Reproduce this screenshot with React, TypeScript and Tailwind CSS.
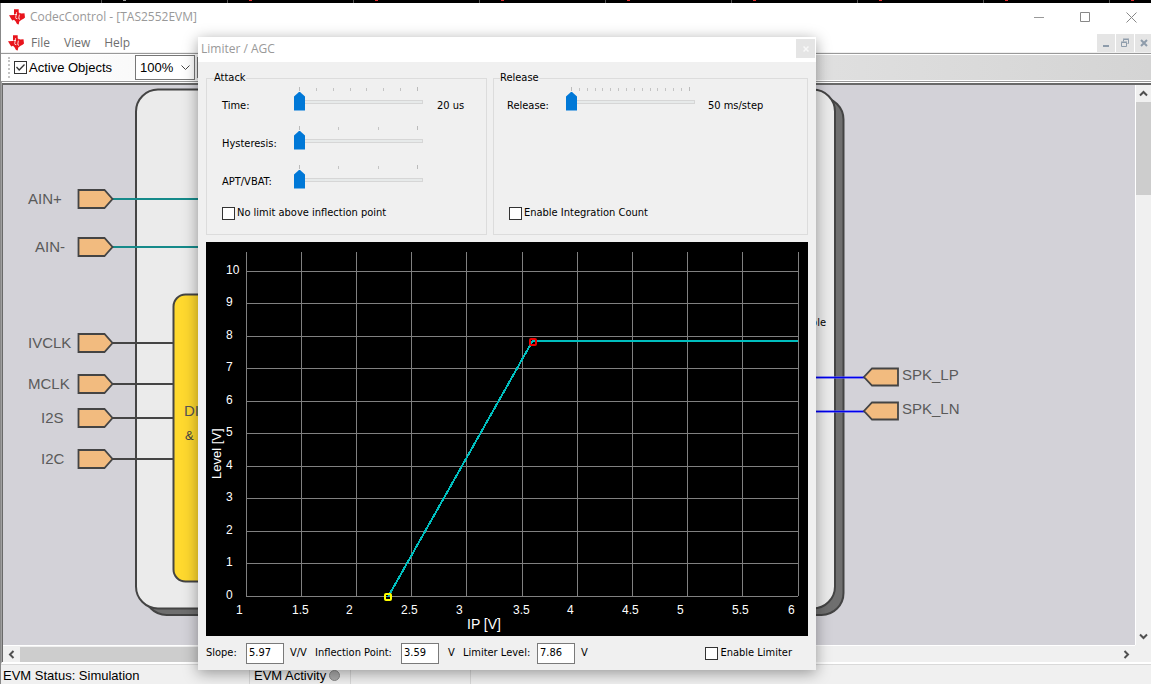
import React from "react";

const UI = "font-['DejaVu_Sans_Condensed','DejaVu_Sans',sans-serif] text-[11px] leading-[14px]";
const SEGOE = "font-['Open_Sans','Noto_Sans',sans-serif] text-xs";

function Logo() {
  return (
    <svg width="17" height="16" viewBox="0 0 17 16" aria-hidden="true" className="shrink-0">
      <path
        d="M5 .3h4.700v3.200l2.600.9 3.200-.1.300 2.700.2 1.600-1.400 1.200-2 .9-2.300 1.900-.6 3-1.700-.7-1.500-2.600-1.500-1.600-1.700.8-1.200-1.700L0 6.300l5-.4z"
        fill="#e8141c"
      />
      <path d="M7.600 3.200 6.700 8.400q-.2 1.500 1.600 1.300M5.400 5.500h2.600M10.400 5.600l-.6 3.400q-.2 1.500 1.200 1.200M10.900 3.400l-.2.900" fill="none" stroke="#fff" strokeWidth=".8" />
    </svg>
  );
}

function TopStrip() {
  return (
    <div className="flex h-[3px] shrink-0 overflow-hidden bg-black pl-[101px]" aria-hidden="true">
      {Array.from({ length: 12 }, (_, i) => (
        <span key={i} className="flex w-[126px] shrink-0 border-l border-[#555] pl-[21px]">
          <span className={i ? "h-px w-[3px] bg-[#e03030]" : "h-px w-[3px] bg-[#999]"} />
        </span>
      ))}
    </div>
  );
}

function TitleBar() {
  return (
    <header className="flex h-[30px] shrink-0 items-center bg-white pb-0.5 pl-2">
      <Logo />
      <h1 className={`${SEGOE} ml-1 flex-1 text-[#999]`}>CodecControl - [TAS2552EVM]</h1>
      <button aria-label="Minimize" className="grid h-7 w-10 place-items-center">
        <svg width="11" height="11"><path d="M0 5.5h10" stroke="#999" /></svg>
      </button>
      <button aria-label="Maximize" className="grid h-7 w-[52px] place-items-center">
        <svg width="11" height="11"><path d="M.5.5h9v9h-9z" fill="none" stroke="#888" /></svg>
      </button>
      <button aria-label="Close" className="grid h-7 w-10 place-items-center">
        <svg width="11" height="11"><path d="M.5.5l10 10M10.500 .5l-10 10" stroke="#888" /></svg>
      </button>
    </header>
  );
}

function MenuBar() {
  const mdi = "grid h-[18px] w-[18px] place-items-center bg-[#e5e5e5]";
  return (
    <nav className="flex h-5 shrink-0 items-center border-b border-[#f0f0f0] bg-white pl-[7px]">
      <Logo />
      <div className={`${SEGOE} ml-1.5 flex flex-1 gap-[14px] text-[#6e6e6e]`}>
        <button>File</button>
        <button>View</button>
        <button>Help</button>
      </div>
      <div className="flex gap-px">
        <button aria-label="Minimize document" className={mdi}>
          <svg width="10" height="10"><path d="M2 8h6" stroke="#8e9cab" strokeWidth="2" /></svg>
        </button>
        <button aria-label="Restore document" className={mdi}>
          <svg width="10" height="10" fill="none" stroke="#8e9cab">
            <path d="M1.500 4.500h5v4h-5zM1 4h6M3.500 3.500v-2h5v4h-1M3 1h6" />
          </svg>
        </button>
        <button aria-label="Close document" className="grid h-[18px] w-4 place-items-center bg-[#e5e5e5] pl-0.5">
          <svg width="8" height="8"><path d="M1 1l6 6M7 1L1 7" stroke="#8e9cab" strokeWidth="2" /></svg>
        </button>
      </div>
    </nav>
  );
}

function Check({ id, label, checked = false }: { id: string; label: string; checked?: boolean }) {
  return (
    <label htmlFor={id} className="flex items-center gap-0.5">
      <input
        id={id}
        type="checkbox"
        defaultChecked={checked}
        className="peer h-[13px] w-[13px] shrink-0 appearance-none border border-[#333] bg-white"
      />
      <svg width="9" height="9" className="-ml-[13px] mr-0.5 hidden shrink-0 peer-checked:block" aria-hidden="true">
        <path d="M.5 4l2.700 3L8.500 1.500" fill="none" stroke="#333" strokeWidth="1.3" />
      </svg>
      {label}
    </label>
  );
}

function Toolbar() {
  return (
    <div className="shrink-0 border-y border-[#999] bg-white py-px">
      <div className="flex h-[25px] items-center bg-linear-to-r from-white via-[#e8e8e8] to-[#d4d4d4] pl-[7px] font-['Liberation_Sans',Arial,sans-serif] text-[13px] leading-4 text-black">
        <span className="mr-1 h-[21px] border-l-2 border-dotted border-[#c4c4c4]" aria-hidden="true" />
        <Check id="active" label="Active Objects" checked />
        <div className="relative ml-[23px] flex h-[25px] w-[60px] items-center border border-[#777] bg-white">
          <select aria-label="Zoom" className="w-full appearance-none pl-1 outline-none">
            <option>100%</option>
          </select>
          <svg width="9" height="6" className="pointer-events-none absolute right-1" aria-hidden="true">
            <path d="M.5.5l4 4 4-4" fill="none" stroke="#444" />
          </svg>
        </div>
        <span className="ml-0.5 h-[21px] border-l border-[#777]" aria-hidden="true" />
      </div>
    </div>
  );
}

const leftPins = [
  { name: "AIN+", x: 25, y: 114, end: 240, color: "#158a8a" },
  { name: "AIN-", x: 32, y: 162, end: 240, color: "#158a8a" },
  { name: "IVCLK", x: 25, y: 258, end: 170, color: "#444" },
  { name: "MCLK", x: 25, y: 299, end: 170, color: "#444" },
  { name: "I2S", x: 38, y: 333, end: 170, color: "#444" },
  { name: "I2C", x: 38, y: 374, end: 170, color: "#444" },
];
const rightPins = [
  { name: "SPK_LP", y: 292 },
  { name: "SPK_LN", y: 326 },
];

function Diagram() {
  return (
    <svg
      width="1132"
      height="560"
      viewBox="0 0 1132 560"
      className="block font-['Liberation_Sans',Arial,sans-serif] text-[15px]"
      role="img"
      aria-label="TAS2552 block diagram"
    >
      <rect x="141.500" y="12.500" width="699" height="517.500" rx="22" fill="#6f6f6f" stroke="#444" strokeWidth="2" />
      <rect x="133" y="4.500" width="699" height="519" rx="22" fill="#ebebeb" stroke="#444" strokeWidth="2" />
      {leftPins.map((p) => (
        <g key={p.name}>
          <path d={`M110 ${p.y}H${p.end}`} stroke={p.color} strokeWidth="1.8" />
          <path d={`M75.500 ${p.y - 9}h26l8 9-8 9h-26z`} fill="#f2bb7f" stroke="#444" strokeWidth="1.8" />
          <text x={p.x} y={p.y + 5} fill="#5a5a5a">{p.name}</text>
        </g>
      ))}
      <rect x="170.500" y="209.500" width="180" height="287" rx="12" fill="#ffd92e" stroke="#444" strokeWidth="2" />
      <text x="181" y="331" fill="#555">DI</text>
      <text x="182" y="355" fill="#444" className="text-[13px]">&amp;</text>
      <text x="823" y="241" textAnchor="end" className="font-['DejaVu_Sans_Condensed','DejaVu_Sans',sans-serif] text-[11px]">Enable</text>
      {rightPins.map((p) => (
        <g key={p.name}>
          <path d={`M780 ${p.y + 0.5}H862`} stroke="#8a8aff" strokeWidth="3" opacity=".5" />
          <path d={`M780 ${p.y + 0.5}H862`} stroke="#0000ee" strokeWidth="1.4" />
          <path d={`M895 ${p.y - 8.500}h-26l-8 8.500 8 8.500h26z`} fill="#f2bb7f" stroke="#444" strokeWidth="1.8" />
          <text x="899" y={p.y + 3} fill="#5a5a5a">{p.name}</text>
        </g>
      ))}
    </svg>
  );
}

function Chevron({ d }: { d: string }) {
  return (
    <svg width="9" height="9" aria-hidden="true">
      <path d={d} fill="none" stroke="#505050" strokeWidth="2" />
    </svg>
  );
}

function Workspace() {
  return (
    <main className="grid min-h-0 flex-1 grid-cols-[minmax(0,1fr)_16px] grid-rows-[minmax(0,1fr)_17px] border-t-2 border-l border-[#696969] bg-[#f0f0f0]">
      <div className="overflow-hidden bg-[#d3d2d8]">
        <Diagram />
      </div>
      <div className="flex flex-col items-center border-l border-white">
        <button aria-label="Scroll up" className="grid h-[17px] place-items-center"><Chevron d="M1 6.500l3.500-3.500L8 6.500" /></button>
        <div className="h-[93px] w-full bg-[#cdcdcd]" />
        <button aria-label="Scroll down" className="mt-auto grid h-[17px] place-items-center"><Chevron d="M1 2.500L4.500 6 8 2.500" /></button>
      </div>
      <div className="flex items-center border-t border-white">
        <button aria-label="Scroll left" className="grid w-[17px] place-items-center"><Chevron d="M6.500 1L3 4.500 6.500 8" /></button>
        <div className="h-[15px] w-1/2 bg-[#cdcdcd]" />
        <button aria-label="Scroll right" className="ml-auto grid w-[17px] place-items-center"><Chevron d="M2.500 1L6 4.500 2.500 8" /></button>
      </div>
    </main>
  );
}

function StatusBar() {
  return (
    <footer className="flex h-5 shrink-0 items-stretch border-t border-[#d9d9d9] bg-[#f0f0f0] font-['Liberation_Sans',Arial,sans-serif] text-[13px] leading-[22px] text-black">
      <span className="w-[249px] border-r border-[#d7d7d7] pl-0.5">EVM Status: Simulation</span>
      <span className="flex w-[101px] items-center border-r border-[#d7d7d7] pl-1 pt-0.5">
        EVM Activity
        <span className="ml-[3px] h-[11px] w-[11px] rounded-full border border-[#888] bg-[#aaa]" />
      </span>
      <span className="w-[120px] border-r border-[#d7d7d7]" />
    </footer>
  );
}

function Slider({ id, ticks }: { id: string; ticks: number }) {
  return (
    <div className="flex h-[39px] w-[129px] flex-col gap-px pt-0.5">
      <div className="flex h-1 items-end justify-between px-[5px]" aria-hidden="true">
        {Array.from({ length: ticks }, (_, i) => (
          <span key={i} className={i === 0 || i === ticks - 1 ? "h-1 w-px bg-[#bbb]" : "h-[3px] w-px bg-[#c4c4c4]"} />
        ))}
      </div>
      <input
        id={id}
        type="range"
        min={0}
        max={ticks - 1}
        defaultValue={0}
        className="m-0 block h-[19px] w-full appearance-none bg-transparent [&::-webkit-slider-runnable-track]:h-1 [&::-webkit-slider-runnable-track]:border [&::-webkit-slider-runnable-track]:border-[#d6d6d6] [&::-webkit-slider-runnable-track]:bg-[#e7eaea] [&::-webkit-slider-thumb]:-mt-[9px] [&::-webkit-slider-thumb]:-ml-px [&::-webkit-slider-thumb]:h-[19px] [&::-webkit-slider-thumb]:w-[11px] [&::-webkit-slider-thumb]:appearance-none [&::-webkit-slider-thumb]:bg-[#0078d7] [&::-webkit-slider-thumb]:[clip-path:polygon(50%_0,100%_26%,100%_100%,0_100%,0_26%)]"
      />
    </div>
  );
}

const gridX = [40, 95, 150, 205, 260, 316, 371, 426, 481, 536, 592];
const gridY = [354, 321, 289, 256, 224, 191, 159, 126, 94, 61, 29];
const xLabels = [
  ["1", 30], ["1.5", 86], ["2", 140], ["2.5", 195], ["3", 250], ["3.5", 307], ["4", 361], ["4.5", 416], ["5", 471], ["5.5", 526], ["6", 582],
] as const;

function Chart() {
  return (
    <svg
      viewBox="0 0 602 394"
      className="mt-[7px] block w-full bg-black font-['Liberation_Sans',Arial,sans-serif] text-xs"
      role="img"
      aria-label="Limiter level against input"
    >
      <g stroke="#808080" shapeRendering="crispEdges">
        {gridX.map((x) => <path key={x} d={`M${x + 0.5} 10V354`} />)}
        {gridY.map((y) => <path key={y} d={`M40 ${y + 0.5}H592`} />)}
      </g>
      <g fill="#fff">
        {gridY.map((y, i) => <text key={i} x="20" y={y + 3}>{i}</text>)}
        {xLabels.map(([t, x]) => <text key={t} x={x} y="372">{t}</text>)}
        <text x="261" y="387" className="text-sm">IP [V]</text>
        <text transform="translate(15 237) rotate(-90)" className="text-[13px]">Level [V]</text>
      </g>
      <path d="M182 355L326.500 99H592" fill="none" stroke="#00bebe" strokeWidth="2" shapeRendering="crispEdges" />
      <g fill="none" strokeWidth="2">
        <rect x="179" y="352" width="6" height="6" rx="1" stroke="#ff0" />
        <rect x="324" y="97" width="6" height="6" rx="1" stroke="#f00000" />
      </g>
    </svg>
  );
}

function Field({ id, label, value, unit, labelClass, unitClass }: { id: string; label: string; value: string; unit: string; labelClass: string; unitClass: string }) {
  return (
    <>
      <label htmlFor={id} className={labelClass}>{label}</label>
      <input id={id} type="text" defaultValue={value} className="h-[21px] w-[38px] border border-[#7a7a7a] bg-white pl-0.5 pb-px outline-none" />
      <span className={unitClass}>{unit}</span>
    </>
  );
}

function LimiterDialog() {
  const group = "min-w-0 border border-[#dcdcdc] pb-[14px]";
  return (
    <section
      role="dialog"
      aria-label="Limiter / AGC"
      className={`${UI} absolute left-[198px] top-[37px] w-[618px] bg-[#f0f0f0] text-black shadow-[0_3px_14px_rgba(0,0,0,0.38)]`}
    >
      <div className="flex h-[25px] items-center justify-between bg-white pb-0.5 pl-[3px] pr-px">
        <h2 className={`${SEGOE} text-[#999]`}>Limiter / AGC</h2>
        <button aria-label="Close dialog" className="grid h-[19px] w-[19px] place-items-center bg-[#e5e5e5]">
          <svg width="6" height="6"><path d="M.5.5l5 5M5.500.5l-5 5" stroke="#f8f8f8" strokeWidth="1.5" /></svg>
        </button>
      </div>
      <div className="px-2 pt-[9px]">
        <div className="grid grid-cols-[281fr_315fr] gap-1.5">
          <fieldset className={`${group} pl-[15px]`}>
            <legend className="-ml-2">Attack</legend>
            <div className="flex">
              <div className="flex w-[72px] flex-col gap-6 pt-[14px]">
                <label htmlFor="time">Time:</label>
                <label htmlFor="hyst">Hysteresis:</label>
                <label htmlFor="apt">APT/VBAT:</label>
              </div>
              <div>
                <Slider id="time" ticks={8} />
                <Slider id="hyst" ticks={4} />
                <Slider id="apt" ticks={4} />
              </div>
              <output htmlFor="time" className="ml-[14px] pt-[14px]">20 us</output>
            </div>
            <div className="mt-1"><Check id="nolimit" label="No limit above inflection point" /></div>
          </fieldset>
          <fieldset className={`${group} pl-[13px]`}>
            <legend className="-ml-[7px]">Release</legend>
            <div className="flex h-[117px]">
              <label htmlFor="release" className="w-[59px] pt-[14px]">Release:</label>
              <Slider id="release" ticks={16} />
              <output htmlFor="release" className="ml-[13px] pt-[14px]">50 ms/step</output>
            </div>
            <div className="ml-0.5 mt-1"><Check id="integration" label="Enable Integration Count" /></div>
          </fieldset>
        </div>
        <Chart />
        <div className="flex h-[34px] items-center pr-4">
          <Field id="slope" label="Slope:" value="5.97" unit="V/V" labelClass="w-10" unitClass="ml-1.5 w-[25px]" />
          <Field id="inflection" label="Inflection Point:" value="3.59" unit="V" labelClass="w-[86px]" unitClass="ml-[9px] w-[15px]" />
          <Field id="level" label="Limiter Level:" value="7.86" unit="V" labelClass="w-[74px]" unitClass="ml-1.5" />
          <div className="ml-auto"><Check id="limiter" label="Enable Limiter" /></div>
        </div>
      </div>
    </section>
  );
}

export default function App() {
  return (
    <div className="relative flex h-screen flex-col overflow-hidden bg-white">
      <TopStrip />
      <div className="flex min-h-0 flex-1 flex-col border-l border-[#888]">
        <TitleBar />
        <MenuBar />
        <Toolbar />
        <div className="flex min-h-0 flex-1 border-b-2 border-l border-b-white border-l-[#a0a0a0] pt-px">
          <div className="flex min-w-0 flex-1"><Workspace /></div>
        </div>
        <StatusBar />
      </div>
      <LimiterDialog />
    </div>
  );
}
